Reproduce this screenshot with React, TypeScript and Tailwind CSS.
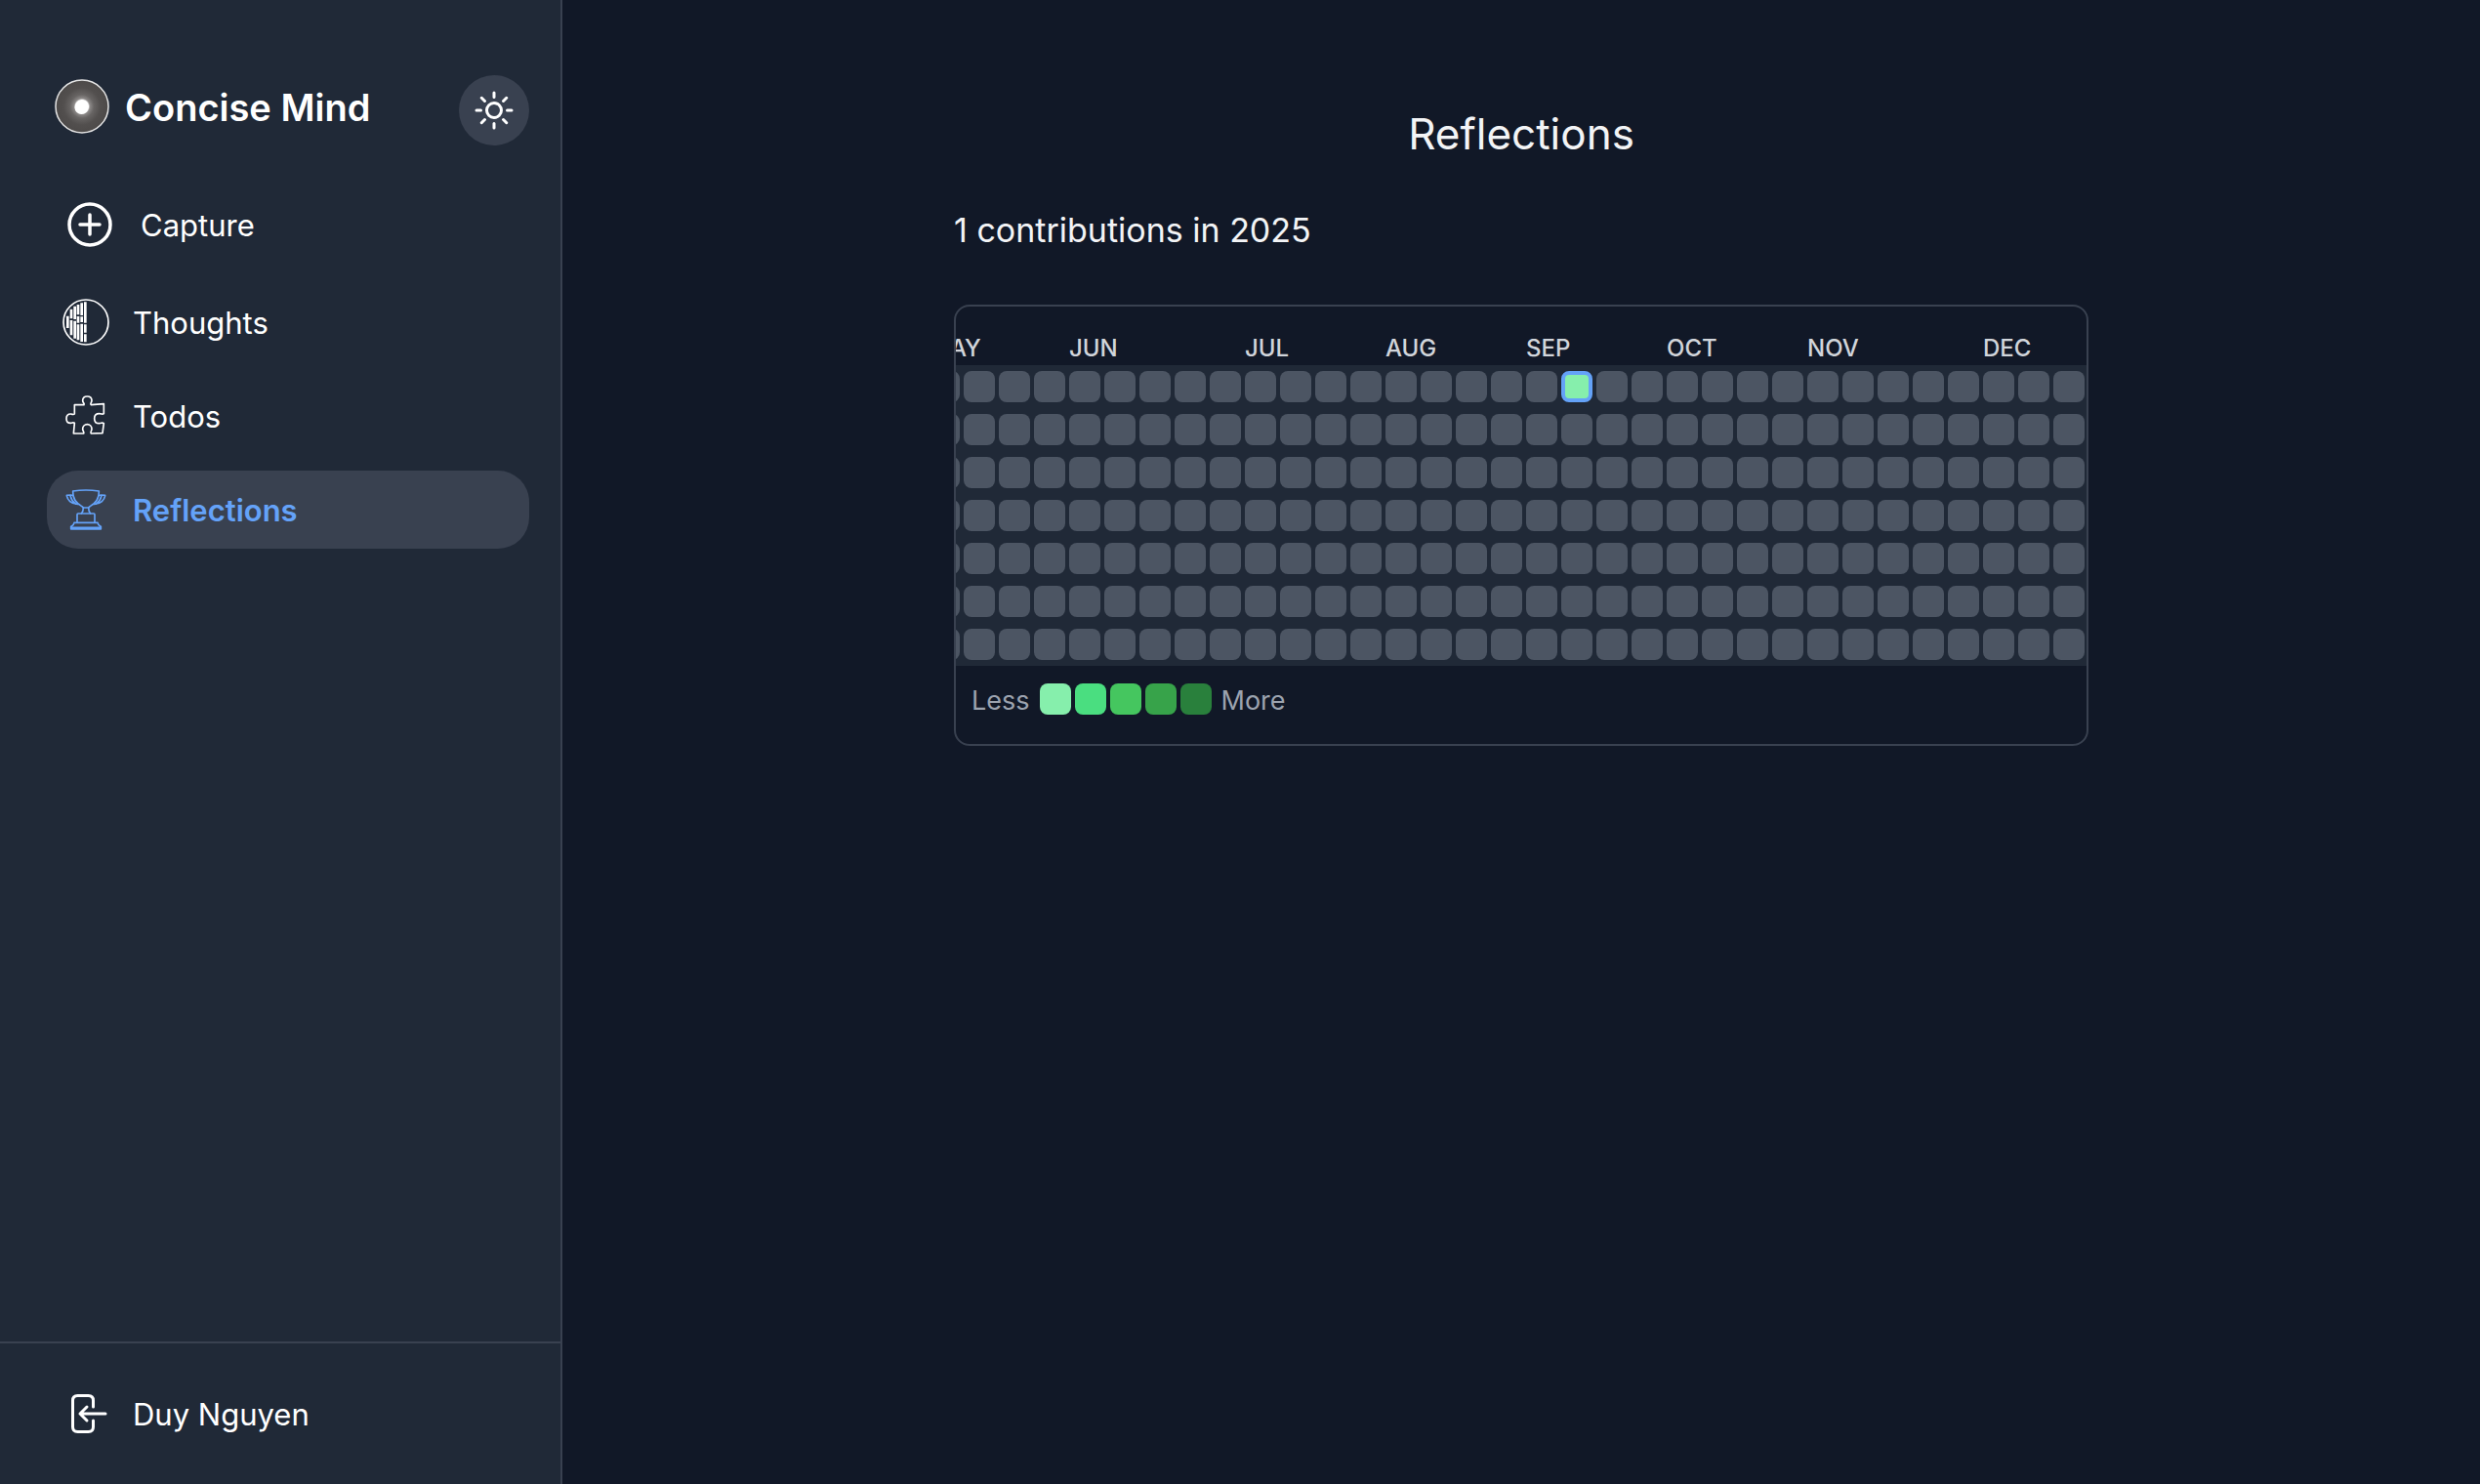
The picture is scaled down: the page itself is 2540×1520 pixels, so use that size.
import type { ReactNode } from "react";
import { HiOutlineSun } from "react-icons/hi2";

const months = [
  { name: "MAY", weeks: 4 },
  { name: "JUN", weeks: 5 },
  { name: "JUL", weeks: 4 },
  { name: "AUG", weeks: 4 },
  { name: "SEP", weeks: 4 },
  { name: "OCT", weeks: 4 },
  { name: "NOV", weeks: 5 },
  { name: "DEC", weeks: 3 },
];
const weeks = Array.from({ length: 33 }, (_, i) => i);
const days = ["Sunday", "Monday", "Tuesday", "Wednesday", "Thursday", "Friday", "Saturday"];
const activeWeek = 18;
const levels = ["bg-[#86efac]", "bg-[#4ade80]", "bg-[#45c65f]", "bg-[#37a34a]", "bg-[#29803c]"];

function Logo() {
  return (
    <svg viewBox="0 0 56 56" className="size-14 shrink-0" aria-hidden="true">
      <defs>
        <radialGradient id="glow">
          <stop offset="0" stopColor="#fff" />
          <stop offset="0.24" stopColor="#fff" />
          <stop offset="0.3" stopColor="#8d8a89" />
          <stop offset="0.45" stopColor="#676463" />
          <stop offset="0.7" stopColor="#524f4e" />
          <stop offset="1" stopColor="#4d4a49" />
        </radialGradient>
      </defs>
      <circle cx="28" cy="28" r="27" fill="url(#glow)" stroke="#e5e5e5" strokeWidth="1.5" />
      <circle cx="27.5" cy="29" r="7" fill="#fff" />
    </svg>
  );
}

function CaptureIcon() {
  return (
    <svg viewBox="0 0 56 56" className="size-14 shrink-0" fill="none" stroke="currentColor" strokeWidth="3.5" strokeLinecap="round" aria-hidden="true">
      <circle cx="28" cy="28" r="21" />
      <path d="M28 18v20M18 28h20" />
    </svg>
  );
}

function ThoughtsIcon() {
  return (
    <svg viewBox="0 0 144 144" className="size-12 shrink-0" fill="none" stroke="currentColor" aria-hidden="true">
      <circle cx="72" cy="72" r="69" strokeWidth="5" />
      <path strokeWidth="8" d="M16 53v37M27 32v29M27 66v46M38 23v40M38 68v54M48 18v31M48 54v20M48 79v48M59 13v38M59 55v17M59 77v55M70 10v64M70 79v25M70 109v24" />
    </svg>
  );
}

function TodosIcon() {
  return (
    <svg viewBox="0 0 144 144" className="size-12 shrink-0" fill="none" stroke="currentColor" strokeWidth="5" strokeLinejoin="round" aria-hidden="true">
      <path d="M37 38L66 38C69 34 62 32 62 25C62 17 68 12 76 12C84 12 90 17 90 25C90 32 83 34 88 38L127 35L127 65C123 68 121 65 113 65C104 65 98 71 98 80C98 89 104 95 113 95C120 95 122 91 127 95L123 125L88 126C84 122 90 119 90 112C90 104 84 98 76 98C68 98 62 104 62 112C62 119 68 122 65 126L34 126L37 94C32 91 31 94 25 94C17 94 12 88 12 80C12 72 17 66 25 66C31 66 33 70 37 66Z" />
    </svg>
  );
}

function ReflectionsIcon() {
  return (
    <svg viewBox="0 0 144 144" className="size-12 shrink-0" fill="none" stroke="currentColor" strokeWidth="5" strokeLinejoin="round" strokeLinecap="round" aria-hidden="true">
      <path d="M32 15Q72 9 112 15C112 34 106 46 96 54C88 60 82 63 80 66H64C62 63 56 60 48 54C38 46 32 34 32 15Z" />
      <path d="M33 29L25 27L13 28C15 42 26 56 48 55M24 28C26 39 32 48 40 54" />
      <path d="M111 29L119 27L131 28C129 42 118 56 96 55M120 28C118 39 112 48 104 54" />
      <path d="M64 66C64 74 62 80 58 84M80 66C80 74 82 80 86 84" />
      <path d="M45 111V87Q45 84 48 84H96Q99 84 99 87V111M36 112H108C109 120 112 121 118 124V132H26V124C32 121 35 120 36 112ZM28 127H116" />
    </svg>
  );
}

function SignOutIcon() {
  return (
    <svg viewBox="0 0 48 48" className="size-12 shrink-0" fill="none" stroke="currentColor" strokeWidth="3" strokeLinecap="round" strokeLinejoin="round" aria-hidden="true">
      <path d="M31.500 17V10.500Q31.500 5.500 26.500 5.500H15.500Q10.500 5.500 10.500 10.500V37.500Q10.500 42.500 15.500 42.500H26.500Q31.500 42.500 31.500 37.500V31" />
      <path d="M44 24H18M25 17L18 24L25 31" />
    </svg>
  );
}

function NavItem({ icon, label, active = false }: { icon: ReactNode; label: string; active?: boolean }) {
  return (
    <a
      href="#"
      aria-current={active ? "page" : undefined}
      className={
        active
          ? "flex items-center gap-6 rounded-[32px] bg-[#394150] p-4 font-semibold text-[#64a2f8]"
          : "flex items-center gap-6 rounded-[32px] p-4 text-white"
      }
    >
      {icon}
      <span className="pt-0.5">{label}</span>
    </a>
  );
}

function Sidebar() {
  return (
    <aside className="flex w-[576px] shrink-0 flex-col border-r-2 border-[#394150] bg-[#202937] text-[31px] leading-10 text-white">
      <div className="flex-1 pt-[77px] pr-8 pl-12">
        <div className="mb-[37px] flex items-center justify-between">
          <div className="flex items-center gap-4 pb-2 pl-2">
            <Logo />
            <span className="pt-0.5 text-[38px] leading-12 font-semibold">Concise Mind</span>
          </div>
          <button type="button" aria-label="Toggle theme" className="rounded-full bg-[#394150] p-3">
            <HiOutlineSun className="size-12" />
          </button>
        </div>
        <nav className="flex flex-col gap-4">
          <NavItem icon={<CaptureIcon />} label="Capture" />
          <NavItem icon={<ThoughtsIcon />} label="Thoughts" />
          <NavItem icon={<TodosIcon />} label="Todos" />
          <NavItem icon={<ReflectionsIcon />} label="Reflections" active />
        </nav>
      </div>
      <div className="border-t-2 border-[#394150] py-8 pr-8 pl-12">
        <button type="button" className="flex w-full items-center gap-6 p-4">
          <SignOutIcon />
          <span className="pt-0.5">Duy Nguyen</span>
        </button>
      </div>
    </aside>
  );
}

function ContributionCard() {
  return (
    <section className="overflow-hidden rounded-2xl border-2 border-[#394150]">
      <div className="flex justify-end overflow-hidden pt-6">
        <table className="shrink-0 border-collapse">
          <thead>
            <tr>
              {months.map((month) => (
                <th key={month.name} scope="colgroup" colSpan={month.weeks} className="h-9 px-0.5 pt-0.5 text-left align-middle text-[24px] leading-8 font-medium text-[#d1d5db]">
                  {month.name}
                </th>
              ))}
            </tr>
          </thead>
          <tbody className="bg-[#202937]">
            {days.map((day, row) => (
              <tr key={day}>
                {weeks.map((week) => (
                  <td key={week} className="px-0.5 py-1.5">
                    <div
                      className={
                        row === 0 && week === activeWeek
                          ? "size-8 rounded-lg border-4 border-[#64a2f8] bg-[#86efac]"
                          : "size-8 rounded-lg bg-[#4c5563]"
                      }
                    />
                  </td>
                ))}
              </tr>
            ))}
          </tbody>
        </table>
      </div>
      <div className="flex items-center gap-2.5 px-4 pt-4 pb-6 text-[27px] leading-10 text-[#9ca3af]">
        <span>Less</span>
        <div className="flex gap-1 pb-1">
          {levels.map((level) => (
            <div key={level} className={`size-8 rounded-lg ${level}`} />
          ))}
        </div>
        <span>More</span>
      </div>
    </section>
  );
}

export default function App() {
  return (
    <div className="flex min-h-screen bg-[#111827] font-['Inter','Liberation_Sans',sans-serif]">
      <Sidebar />
      <main className="min-w-0 flex-1 px-8 pt-[105px] text-[#f3f4f6]">
        <div className="mx-auto max-w-[1162px]">
          <h1 className="text-center text-[44px] leading-16 font-normal">Reflections</h1>
          <h2 className="mt-[43px] mb-[52px] text-[34px] leading-12">1 contributions in 2025</h2>
          <ContributionCard />
        </div>
      </main>
    </div>
  );
}
